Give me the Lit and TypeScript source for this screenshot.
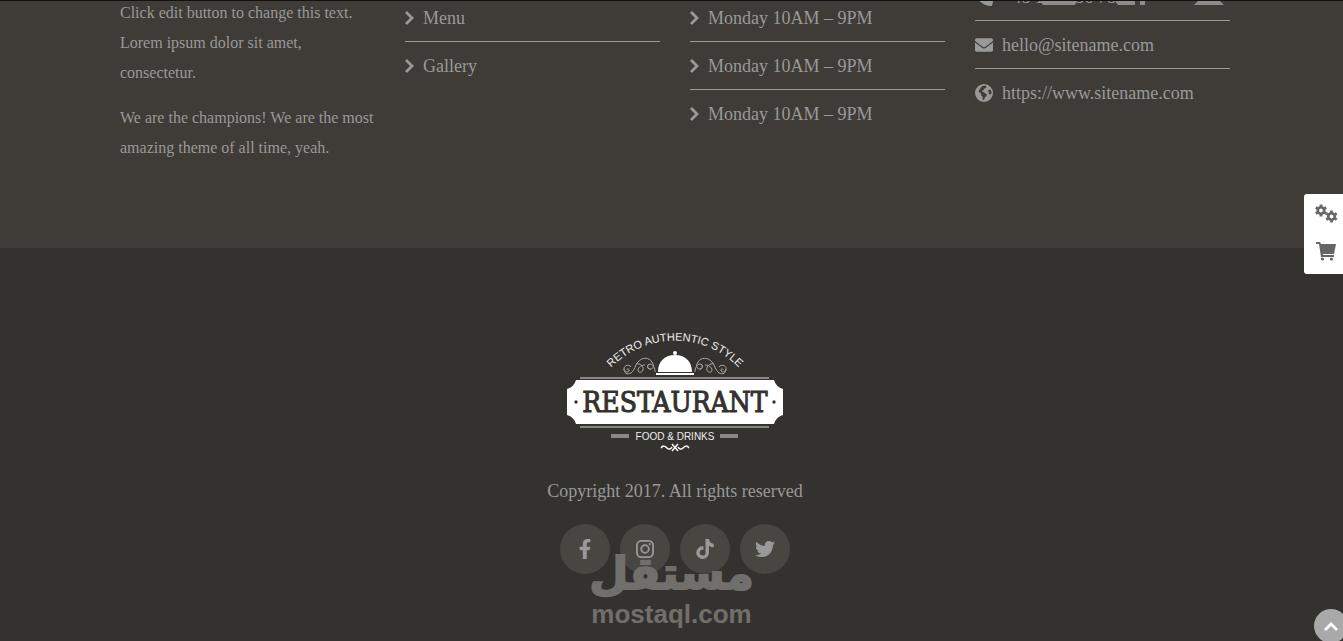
import { LitElement, html, svg, css } from "lit";
import { customElement } from "lit/decorators.js";

const chevron = svg`<path d="M1 2 7 8 1 14" fill="none" stroke="currentColor" stroke-width="2.8"/>`;

const phone = svg`<path d="M493.4 24.6l-104-24c-11.3-2.6-22.9 3.3-27.5 13.9l-48 112c-4.200 9.800-1.400 21.300 6.900 28l60.600 49.600c-36 76.700-98.900 140.500-177.200 177.200l-49.600-60.600c-6.800-8.300-18.200-11.100-28-6.900l-112 48C3.900 366.500-2 378.100.600 389.400l24 104C27.100 504.200 36.700 512 48 512c256.100 0 464-207.500 464-464 0-11.200-7.700-20.900-18.600-23.400z" transform="matrix(-1 0 0 1 512 0)"/>`;
const envelope = svg`<path d="M502.3 190.8c3.9-3.1 9.7-.2 9.7 4.7V400c0 26.5-21.5 48-48 48H48c-26.500 0-48-21.500-48-48V195.600c0-5 5.700-7.800 9.700-4.700 22.400 17.400 52.100 39.500 154.100 113.600 21.100 15.400 56.700 47.800 92.200 47.600 35.700.300 72-32.800 92.300-47.600 102-74.100 131.600-96.300 154-113.700zM256 320c23.200.400 56.600-29.200 73.400-41.400 132.700-96.300 142.800-104.700 173.400-128.700 5.800-4.500 9.200-11.500 9.200-18.900v-19c0-26.500-21.500-48-48-48H48c-26.500 0-48 21.500-48 48v19c0 7.400 3.400 14.300 9.200 18.900 30.600 23.900 40.700 32.400 173.400 128.700 16.800 12.200 50.200 41.800 73.400 41.400z"/>`;
const globe = svg`<circle cx="256" cy="256" r="256"/><path fill="#3f3b36" d="M196 62l96-18 40 34-36 44-38 10-12 40-46 20 14 32 50 10 14 28 60 26-14 54-44 40-24 66-32 16-8-100-38-40-6-54-70-50 20-60zM390 160l50 0 30 60-6 64-40 16-36-30 4-50-24-26z"/>`;

const socials = [
  { label: "Facebook", box: "0 0 320 512", art: svg`<path d="M279.140 288l14.220-92.660h-88.910v-60.130c0-25.350 12.420-50.060 52.240-50.060h40.420V6.260S260.430 0 225.360 0c-73.220 0-121.080 44.380-121.080 124.720v70.620H22.890V288h81.390v224h100.170V288z"/>` },
  { label: "Instagram", box: "0 0 20 20", art: svg`<rect x="1.900" y="1.900" width="16.200" height="16.200" rx="4.500" fill="none" stroke="currentColor" stroke-width="1.800"/><circle cx="10" cy="10" r="3.800" fill="none" stroke="currentColor" stroke-width="1.800"/><circle cx="14.800" cy="5.200" r="1.100"/>` },
  { label: "TikTok", box: "0 0 448 512", art: svg`<path d="M448,209.910a210.060,210.060,0,0,1-122.770-39.250V349.380A162.550,162.550,0,1,1,185,188.310V278.200a74.620,74.620,0,1,0,52.230,71.180V0l88,0a121.180,121.180,0,0,0,1.860,22.170h0A122.180,122.180,0,0,0,381,102.390a121.430,121.430,0,0,0,67,20.140Z"/>` },
  { label: "Twitter", box: "0 0 512 512", art: svg`<path d="M459.370 151.716c.325 4.548.325 9.097.325 13.645 0 138.720-105.583 298.558-298.558 298.558-59.452 0-114.680-17.219-161.137-47.106 8.447.974 16.568 1.299 25.340 1.299 49.055 0 94.213-16.568 130.274-44.832-46.132-.975-84.792-31.188-98.112-72.772 6.498.974 12.995 1.624 19.818 1.624 9.421 0 18.843-1.300 27.614-3.573-48.081-9.747-84.143-51.980-84.143-102.985v-1.299c13.969 7.797 30.214 12.670 47.431 13.319-28.264-18.843-46.781-51.005-46.781-87.391 0-19.492 5.197-37.360 14.294-52.954 51.655 63.675 129.300 105.258 216.365 109.807-1.624-7.797-2.599-15.918-2.599-24.040 0-57.828 46.782-104.934 104.934-104.934 30.213 0 57.502 12.670 76.670 33.137 23.715-4.548 46.456-13.320 66.599-25.340-7.798 24.366-24.366 44.833-46.132 57.827 21.117-2.273 41.584-8.122 60.426-16.243-14.292 20.791-32.161 39.308-52.628 54.253z"/>` },
];

const swirl = svg`<path d="M63 40c0-2 3-1 2 1c-2 2-5 0-5-2c0-4 5-5 7-2M60 39c0 4 3 6 7 4c4-3 4-8 7-11c4-5 11-5 14 0c2 3 2 6-1 7c-3 1-5-3-2-5M72 34c4-1 8 2 7 6c-1 3-5 3-5 0c0-3 4-5 7-5M86 39c-3 0-3-5 0-5c3 0 5 4 5 8" fill="none" stroke="#a9a8a6" stroke-width="1"/>`;

const flourish = svg`<path d="M97 118c2-3 4-2 6 0s4 1 5-1" fill="none" stroke="#fff" stroke-width="1.500"/>`;

@customElement("brand-logo")
class BrandLogo extends LitElement {
  static styles = css`
    :host { display: block; }
    svg { display: block; }
    .name { font-family: "DejaVu Serif Condensed", "DejaVu Serif", serif; font-size: 28px; fill: #34322e; stroke: #34322e; stroke-width: 1px; }
    .small { font-family: "Liberation Sans", Arial, sans-serif; fill: #eee; }
    .arc { font-size: 11px; }
    .tag { font-size: 10px; }
  `;
  render() {
    return html`<svg width="222" height="124" viewBox="0 0 222 124" role="img" aria-label="Restaurant, food and drinks">
      <path id="arc" d="M40 46A89 89 0 0 1 182 46" fill="none"/>
      <text class="small arc" text-anchor="middle"><textPath href="#arc" startOffset="50%">RETRO AUTHENTIC STYLE</textPath></text>
      ${swirl}
      <g transform="matrix(-1 0 0 1 222 0)">${swirl}</g>
      <g fill="#fff">
        <circle cx="111" cy="23" r="2"/>
        <path d="M94 42C94 31 101 25 111 25S128 31 128 42zM92 43h38v2H92z"/>
        <path d="M12 50H210Q212 57 219 59V85Q212 87 210 94H12Q10 87 3 85V59Q10 57 12 50z"/>
      </g>
      <path d="M16 48H205M16 97H205" stroke="#a5a4a1" stroke-width="1.500"/>
      <g fill="#34322e"><circle cx="12" cy="72" r="1.700"/><circle cx="210" cy="72" r="1.700"/></g>
      <text class="name" x="111" y="82" text-anchor="middle">RESTAURANT</text>
      <path d="M47 104h18v4H47zM156 104h18v4h-18z" fill="#888784"/>
      <text class="small tag" x="111" y="110" text-anchor="middle">FOOD &amp; DRINKS</text>
      ${flourish}
      <g transform="matrix(-1 0 0 1 222 0)">${flourish}</g>
      <path d="M108 114l6 7M114 114l-6 7" stroke="#fff" stroke-width="1.400"/>
    </svg>`;
  }
}

@customElement("app-root")
class AppRoot extends LitElement {
  static styles = css`
    :host {
      display: flex; flex-direction: column; position: relative; box-sizing: border-box;
      min-height: 100vh; overflow: hidden; border-top: 1px solid #111;
      background: #34322e; color: #999;
      font: 18px/24px "Liberation Serif", "Times New Roman", serif;
    }
    a { color: inherit; text-decoration: none; }
    svg { fill: currentColor; flex: none; }
    .widgets { background: #3f3b36; padding: 0 0 85px 7px; }
    .columns {
      display: grid; grid-template-columns: repeat(4, minmax(0, 1fr)); gap: 30px;
      max-width: 1110px; margin: 0 auto;
    }
    .about { margin-top: -3px; font-size: 16px; line-height: 30px; }
    .about p { margin: 0 0 15px; }
    .about p:last-child { margin: 0; }
    ul { list-style: none; margin: 0; padding: 0; }
    .list { margin-top: -7px; }
    .contact { margin-top: -28px; }
    .row { display: flex; align-items: center; height: 47px; gap: 9px; border-bottom: 1px solid #999; }
    .row:last-child { border-bottom: 0; }
    .legal {
      flex: 1; display: flex; flex-direction: column; align-items: center;
      padding: 82px 0 66px 7px;
    }
    .copy { margin: 25px 0 0; }
    .socials { display: flex; gap: 10px; margin-top: 21px; }
    .social {
      display: grid; place-items: center; width: 50px; height: 50px;
      border-radius: 50%; background: #484640;
    }
    .tools {
      position: absolute; right: 0; top: 193px; width: 39px; height: 80px; box-sizing: border-box;
      background: #fff; border-radius: 3px 0 0 3px; color: #666; padding-bottom: 4px;
      display: flex; flex-direction: column;
    }
    button { border: 0; padding: 0; background: none; color: inherit; display: grid; place-items: center; }
    .tools button { flex: 1; padding-left: 5px; }
    .top {
      position: absolute; right: -5px; bottom: -2px; width: 34px; height: 34px;
      border-radius: 50%; background: #a9a9a9; color: #fff;
    }
    .mark {
      position: absolute; left: 0; right: 0; bottom: 12px; text-align: center;
      color: #706f6c; pointer-events: none; font-weight: 700;
    }
    .arabic { font-family: "DejaVu Sans", sans-serif; font-size: 45px; line-height: 50px; -webkit-text-stroke: 2px #706f6c; paint-order: stroke; }
    .latin { font-family: "Liberation Sans", Arial, sans-serif; font-size: 26px; line-height: 30px; }
    .scrap { position: absolute; left: 1040px; top: 0; color: #8d8c8a; }
  `;

  private entry(text: string) {
    return html`<li class="row"><svg width="9" height="16" viewBox="0 0 9 16">${chevron}</svg><span>${text}</span></li>`;
  }

  private contact(icon: unknown, text: string, href: string) {
    return html`<li class="row"><svg width="18" height="18" viewBox="0 0 512 512">${icon}</svg><a href=${href}>${text}</a></li>`;
  }

  private gear(x: number, y: number) {
    return svg`<g transform="translate(${x} ${y})" fill="none" stroke="currentColor">
      <circle r="3.200" stroke-width="2.600"/>
      ${[0, 60, 120, 180, 240, 300].map((a) => svg`<path d="M0-4V-6" stroke-width="2.800" transform="rotate(${a})"/>`)}
    </g>`;
  }

  render() {
    return html`
      <section class="widgets">
        <div class="columns">
          <div class="about">
            <p>Click edit button to change this text. Lorem ipsum dolor sit amet, consectetur.</p>
            <p>We are the champions! We are the most amazing theme of all time, yeah.</p>
          </div>
          <ul class="list">${["Menu", "Gallery"].map((t) => this.entry(t))}</ul>
          <ul class="list">${[1, 2, 3].map(() => this.entry("Monday 10AM – 9PM"))}</ul>
          <ul class="contact">
            ${this.contact(phone, "+48 123 456 789", "tel:+48123456789")}
            ${this.contact(envelope, "hello@sitename.com", "mailto:hello@sitename.com")}
            ${this.contact(globe, "https://www.sitename.com", "https://www.sitename.com")}
          </ul>
        </div>
      </section>
      <footer class="legal">
        <brand-logo></brand-logo>
        <p class="copy">Copyright 2017. All rights reserved</p>
        <nav class="socials">
          ${socials.map((s) => html`<a class="social" href="#" aria-label=${s.label}><svg width="20" height="20" viewBox=${s.box}>${s.art}</svg></a>`)}
        </nav>
      </footer>
      <svg class="scrap" width="186" height="4" viewBox="0 0 186 4"><path d="M0 0h37l-2 4H3zM75 0h20v4H78zM100 0h5v4h-5zM158 0h22l4 4h-30z"/></svg>
      <div class="mark">
        <div class="arabic" lang="ar" dir="rtl">مستقل</div>
        <div class="latin">mostaql.com</div>
      </div>
      <div class="tools">
        <button aria-label="Settings"><svg width="24" height="20" viewBox="0 0 24 20">${this.gear(7, 7.5)}${this.gear(17.5, 13.5)}</svg></button>
        <button aria-label="Cart"><svg width="20" height="20" viewBox="0 0 20 20"><path d="M0 1h4l1 2h15l-2 10H7v1h11v2H5L3 3H0z"/><circle cx="6.500" cy="18" r="1.600"/><circle cx="15.500" cy="18" r="1.600"/></svg></button>
      </div>
      <button class="top" aria-label="Back to top"><svg width="16" height="10" viewBox="0 0 16 10"><path d="M2 9 8 3l6 6" fill="none" stroke="currentColor" stroke-width="2.800"/></svg></button>
    `;
  }
}
